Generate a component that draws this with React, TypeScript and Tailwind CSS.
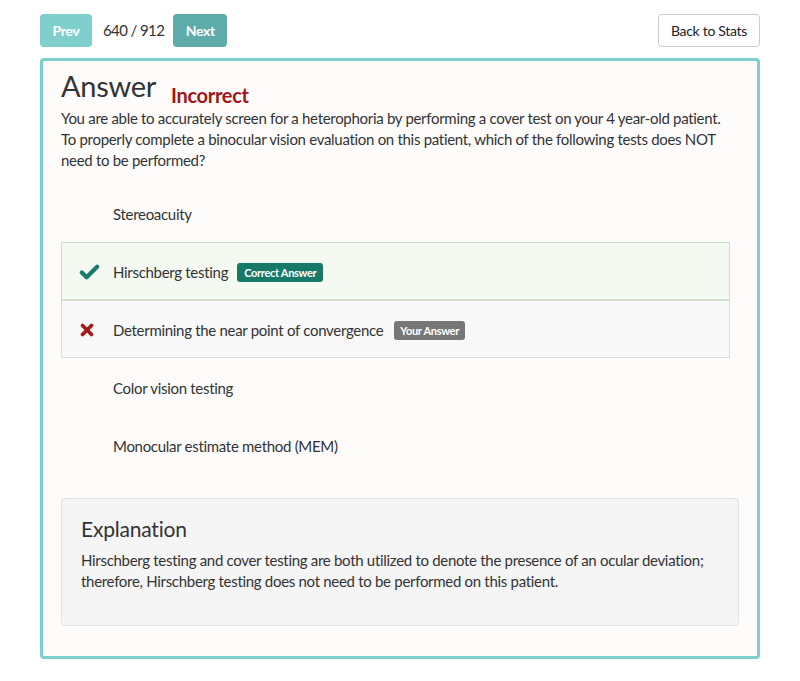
import { Check, X } from "lucide-react";

const options = [
  { text: "Stereoacuity", state: "none" },
  { text: "Hirschberg testing", state: "correct" },
  { text: "Determining the near point of convergence", state: "yours" },
  { text: "Color vision testing", state: "none" },
  { text: "Monocular estimate method (MEM)", state: "none" },
];

function OptionRow({ text, state }: { text: string; state: string }) {
  const rowClass =
    state === "correct"
      ? "bg-[#f4faf2] border-[#c6e3bf]"
      : state === "yours"
        ? "bg-[#f8f8f8] border-[#dcdcdc]"
        : "bg-transparent border-transparent";

  return (
    <div className={`flex h-[58px] items-center border pl-[16px] pt-[2px] ${rowClass}`}>
      <div className="flex w-[35px] items-center">
        {state === "correct" && <Check className="h-[23px] w-[23px] text-[#1b7a6b]" strokeWidth={4.5} />}
        {state === "yours" && <X className="h-[18px] w-[18px] text-[#a31a1a]" strokeWidth={5} />}
      </div>
      <span className="text-[15px] tracking-[-0.3px] text-[#333]">{text}</span>
      {state === "correct" && (
        <span className="ml-[9px] rounded-[3px] bg-[#177a69] px-[7px] py-[3px] text-[11px] font-bold leading-[13px] tracking-[-0.3px] text-white">
          Correct Answer
        </span>
      )}
      {state === "yours" && (
        <span className="ml-[11px] rounded-[3px] bg-[#777] px-[6px] py-[3px] text-[11px] font-bold leading-[13px] tracking-[-0.3px] text-white">
          Your Answer
        </span>
      )}
    </div>
  );
}

export default function App() {
  return (
    <div className="min-h-screen bg-white px-[40px] pt-[14px] font-['Lato',sans-serif] text-[#333]">
      <div className="flex items-center justify-between">
        <div className="flex items-center">
          <button className="h-[33px] w-[52px] rounded-[4px] bg-[#7fd0cd] text-[14px] font-bold tracking-[-0.3px] text-white">
            Prev
          </button>
          <span className="ml-[11px] text-[15px] tracking-[-0.6px] text-[#333]">640 / 912</span>
          <button className="ml-[9px] h-[33px] w-[54px] rounded-[4px] bg-[#5eaca9] text-[14px] font-bold tracking-[-0.3px] text-white">
            Next
          </button>
        </div>
        <button className="h-[33px] w-[102px] rounded-[4px] border border-[#ccc] bg-white text-[14px] tracking-[-0.3px] text-[#222]">
          Back to Stats
        </button>
      </div>

      <div className="mt-[11px] rounded-[4px] border-[3px] border-[#7dcfcc] bg-[#fdfcfb] pb-[30px] pl-[18px] pr-[27px] pt-[5px]">
        <div className="flex items-end">
          <h1 className="text-[29px] leading-[40px] tracking-[-0.3px] text-[#333]">Answer</h1>
          <span className="mb-[-4px] ml-[15px] text-[20px] font-bold leading-[30px] tracking-[-0.3px] text-[#a31515]">
            Incorrect
          </span>
        </div>
        <p className="mt-[2px] text-[15px] leading-[21px] tracking-[-0.3px] text-[#333]">
          You are able to accurately screen for a heterophoria by performing a cover test on your 4 year-old patient.
          To properly complete a binocular vision evaluation on this patient, which of the following tests does NOT
          need to be performed?
        </p>

        <div className="mt-[13px]">
          {options.map((o) => (
            <OptionRow key={o.text} text={o.text} state={o.state} />
          ))}
        </div>

        <div className="mr-[-9px] mt-[24px] rounded-[4px] border border-[#e3e3e3] bg-[#f5f5f5] px-[19px] pb-[33px] pt-[16px]">
          <h2 className="text-[21px] leading-[28px] tracking-[-0.2px] text-[#333]">Explanation</h2>
          <p className="mt-[7px] text-[15px] leading-[21px] tracking-[-0.3px] text-[#333]">
            Hirschberg testing and cover testing are both utilized to denote the presence of an ocular deviation;
            therefore, Hirschberg testing does not need to be performed on this patient.
          </p>
        </div>
      </div>
    </div>
  );
}
